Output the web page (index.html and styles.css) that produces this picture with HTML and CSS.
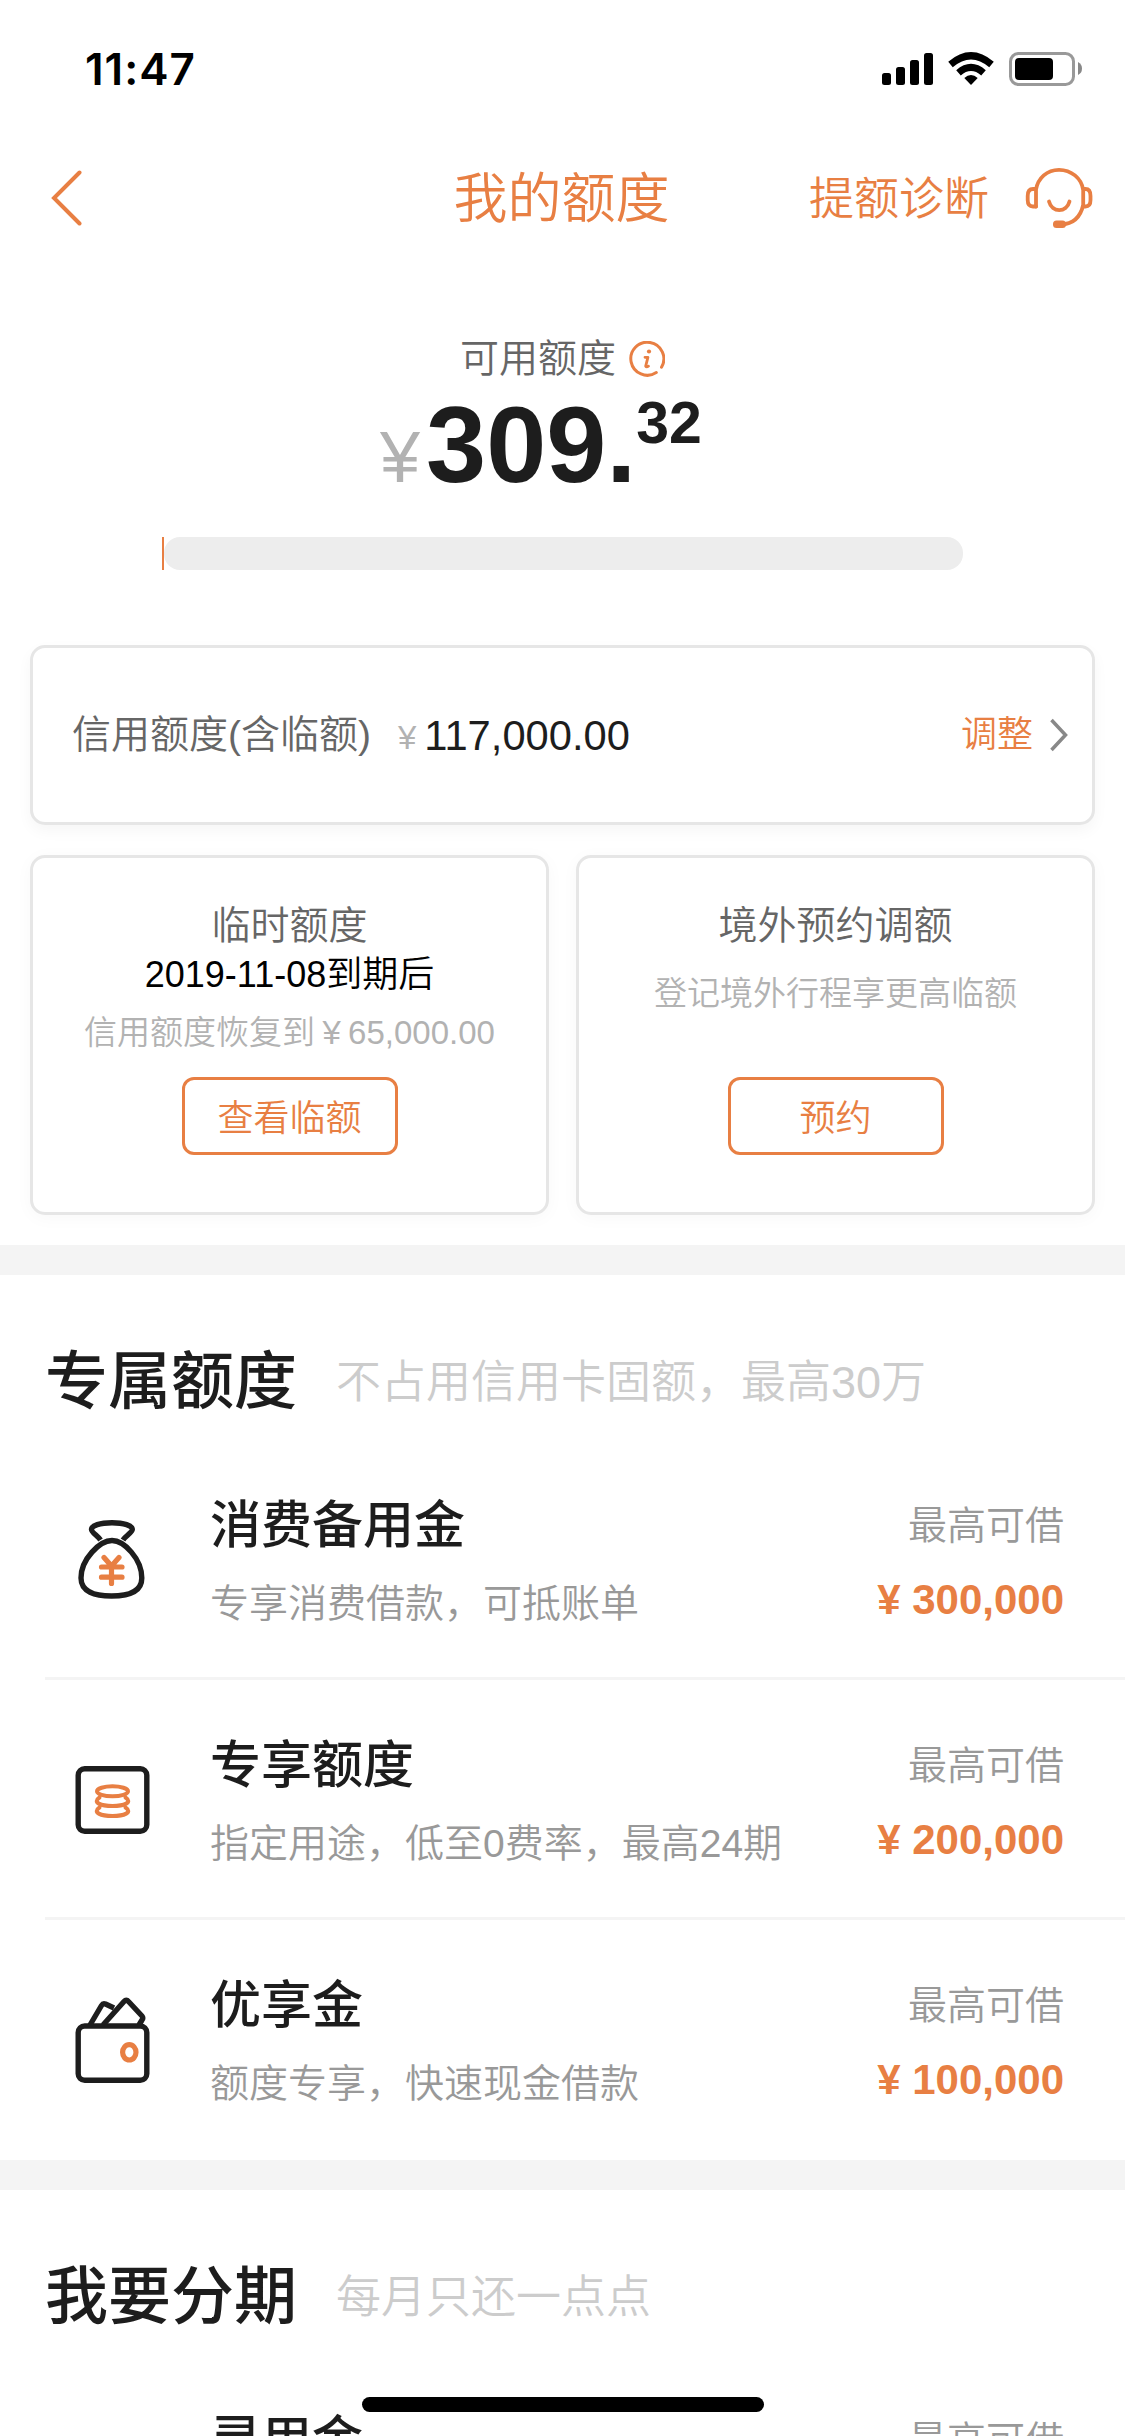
FILE: index.html
```html
<!DOCTYPE html>
<html lang="zh-CN">
<head>
<meta charset="utf-8">
<title>我的额度</title>
<link rel="stylesheet" href="styles.css">
</head>
<body>
<div class="screen">
  <div class="status">
    <span class="time">11:47</span>
    <svg class="status-icons" width="202" height="36" viewBox="881 51 202 36">
      <rect x="882" y="73" width="9" height="12" rx="2.5"/>
      <rect x="896" y="67" width="9" height="18" rx="2.5"/>
      <rect x="910" y="60" width="9" height="25" rx="2.5"/>
      <rect x="924" y="53" width="9" height="32" rx="2.5"/>
      <g fill="none" stroke="#000" stroke-width="7">
        <path d="M950.5 64.5Q971 47 991.500 64.500"/>
        <path d="M958.500 72.800Q971 62 983.500 72.800"/>
      </g>
      <path d="M964.300 78Q971 72 977.700 78L971 85Z"/>
      <rect x="1010.500" y="53.500" width="63" height="31" rx="8" fill="none" stroke="#999" stroke-width="3"/>
      <rect x="1015" y="58" width="38" height="22" rx="4"/>
      <path d="M1078 62Q1082 64 1082 68.500T1078 75Z" fill="#888"/>
    </svg>
  </div>

  <header class="nav">
    <svg class="back" width="32" height="58" viewBox="0 0 32 58"><path d="M29.500 3.500L4 29L29.500 54.500"/></svg>
    <h1 class="nav-title">我的额度</h1>
    <div class="nav-actions">
      <span>提额诊断</span>
      <svg class="headset" width="68" height="62" viewBox="1025 167 68 62">
        <path d="M1036 206.500V189.500C1038 178 1047 169.800 1059 169.800S1081.500 178 1083.200 190V205C1080.500 217 1073 224 1061 224.500"/>
        <path d="M1035.500 189H1033Q1027.700 189 1027.700 196V200Q1027.700 206.500 1033 206.500H1036"/>
        <path d="M1083.500 189H1085.500Q1090.500 189 1090.500 196V200Q1090.500 206.500 1085.500 206.500H1083"/>
        <path d="M1049 201.500C1052 213 1066.500 213 1069.500 201.500"/>
        <rect class="mic" x="1053" y="220.500" width="13" height="7.500" rx="3.500"/>
      </svg>
    </div>
  </header>

  <section class="hero">
    <div class="hero-label">
      <span>可用额度</span>
      <svg width="36" height="36" viewBox="0 0 36 36">
        <path class="ring" d="M32.500 26.200A16.500 16.500 0 1 0 27.300 31.600"/>
        <circle class="dot" cx="20" cy="10.500" r="2.100"/>
        <path class="stem" d="M16 16.300H18.900L16.700 25.200Q17.500 26.500 19.500 25.200"/>
      </svg>
    </div>
    <div class="hero-amount"><span class="yen">¥</span>309.<span class="cents">32</span></div>
    <div class="meter"><i class="meter-used"></i><i class="meter-rest"></i></div>
  </section>

  <section class="cards">
    <div class="card credit">
      <span class="credit-label">信用额度(含临额)</span>
      <span class="credit-yen">¥</span>
      <span class="credit-amount">117,000.00</span>
      <span class="adjust">调整</span>
      <svg class="chevron" width="20" height="34" viewBox="0 0 20 34"><path d="M2.500 2L16.500 17L2.500 32"/></svg>
    </div>
    <div class="card option">
      <div class="option-title">临时额度</div>
      <div class="option-date">2019-11-08到期后</div>
      <div class="option-note restore">信用额度恢复到<span class="wide-yen">¥</span>65,000.00</div>
      <div class="button">查看临额</div>
    </div>
    <div class="card option">
      <div class="option-title">境外预约调额</div>
      <div class="option-note travel">登记境外行程享更高临额</div>
      <div class="button">预约</div>
    </div>
  </section>

  <section class="group">
    <div class="group-head"><h2>专属额度</h2><span>不占用信用卡固额，最高30万</span></div>
    <div class="row">
      <svg class="icon" width="80" height="96" viewBox="0 0 80 96">
        <path d="M40 28.500C52 28.500 69.800 47 69.800 66C69.800 80 56 84 39.500 84S9 80 9 66C9 47 28 28.500 40 28.500Z"/>
        <path d="M28.500 28C26 24 19.500 20.500 19.500 17.500C19.500 13.500 28 10.700 40 10.700S60.300 13.500 60.300 17.500C60.300 20.500 53.500 24 51 28"/>
        <path class="accent" d="M32 45.500L39.500 54L47 45.500M39.500 54V71.500M29.500 55H50M29.500 65.200H50"/>
      </svg>
      <div class="row-text"><h3>消费备用金</h3><p>专享消费借款，可抵账单</p></div>
      <div class="row-value"><span>最高可借</span><b>¥ 300,000</b></div>
    </div>
    <div class="row">
      <svg class="icon" width="80" height="96" viewBox="0 0 80 96">
        <rect x="6.200" y="16.700" width="68.600" height="62.600" rx="6.500"/>
        <g class="accent thin">
          <ellipse cx="40.500" cy="39.300" rx="15.500" ry="5"/>
          <path d="M27.500 45.500C20 50.500 29 54 40.500 54S61 50.500 53.500 45.500"/>
          <path d="M27.500 55.500C20 60.500 29 64 40.500 64S61 60.500 53.500 55.500"/>
        </g>
      </svg>
      <div class="row-text"><h3>专享额度</h3><p>指定用途，低至0费率，最高24期</p></div>
      <div class="row-value"><span>最高可借</span><b>¥ 200,000</b></div>
    </div>
    <div class="row">
      <svg class="icon" width="80" height="96" viewBox="0 0 80 96">
        <rect x="6.200" y="34" width="68.600" height="54.200" rx="6.500"/>
        <path d="M18 33L29.500 13.500Q31 11 33.500 12L42 16"/>
        <path d="M31 33L52 9.500Q54.300 7 56.500 9.500L70 24Q71.500 26 70 28L67 33"/>
        <ellipse class="accent" cx="57.300" cy="60.300" rx="6.700" ry="7.700"/>
      </svg>
      <div class="row-text"><h3>优享金</h3><p>额度专享，快速现金借款</p></div>
      <div class="row-value"><span>最高可借</span><b>¥ 100,000</b></div>
    </div>
  </section>

  <section class="group">
    <div class="group-head"><h2>我要分期</h2><span>每月只还一点点</span></div>
    <div class="row">
      <div class="icon"></div>
      <div class="row-text"><h3>灵用金</h3></div>
      <div class="row-value"><span>最高可借</span></div>
    </div>
  </section>
  <div class="home-indicator"></div>
</div>
</body>
</html>
```
FILE: styles.css
```css
* { box-sizing: border-box; }
body {
  margin: 0;
  background: #fff;
  color: #1d1d1d;
  font-family: "Liberation Sans", "Noto Sans CJK SC", sans-serif;
  font-weight: 350;
}
h1, h2, h3, p { margin: 0; }
svg { display: block; flex: none; }
.screen { position: relative; width: 1125px; height: 2436px; overflow: hidden; }

.status {
  height: 132px;
  padding: 6px 42px 0 85px;
  display: flex;
  align-items: center;
  justify-content: space-between;
  color: #000;
}
.time { font: 600 44px/1 Inter, sans-serif; letter-spacing: 1px; }

.nav {
  height: 132px;
  padding: 0 32px 0 30px;
  display: grid;
  grid-template-columns: 1fr auto 1fr;
  align-items: center;
  color: #e87f43;
}
.back { margin-left: 20px; }
.back path { fill: none; stroke: #e87f43; stroke-width: 4; stroke-linecap: round; }
.nav-title { font-size: 54px; font-weight: 350; line-height: 70px; padding-top: 2px; }
.nav-actions { display: flex; align-items: center; justify-content: flex-end; gap: 36px; font-size: 45px; line-height: 60px; white-space: nowrap; }
.nav-actions span { padding-top: 4px; }
.headset path { fill: none; stroke: #e87f43; stroke-width: 3.8; stroke-linecap: round; stroke-linejoin: round; }
.headset .mic { fill: #e87f43; }

.hero { height: 381px; padding-top: 65px; }
.hero-label {
  height: 60px;
  display: flex;
  align-items: center;
  justify-content: center;
  gap: 13px;
  font-size: 39px;
  line-height: 50px;
  color: #666;
}
.hero-label .ring { fill: none; stroke: #e87f43; stroke-width: 3; stroke-linecap: round; }
.hero-label .dot { fill: #e87f43; }
.hero-label .stem { fill: none; stroke: #e87f43; stroke-width: 2.800; stroke-linecap: round; stroke-linejoin: round; }
.hero-amount {
  margin: 2px 0 38px;
  padding-right: 43px;
  height: 108px;
  text-align: center;
  font-size: 108px;
  font-weight: 700;
  line-height: 108px;
}
.yen { margin-right: 6px; font-size: 72px; font-weight: 400; line-height: 1; color: #b2b2b2; }
.cents { font-size: 59px; line-height: 0; vertical-align: 39px; }
.meter { width: 801px; height: 33px; margin-left: 162px; display: flex; }
.meter-used { width: 2px; background: #e87f43; }
.meter-rest { flex: 1; border-radius: 16px; background: #ededed; }

.cards {
  padding: 0 30px 30px;
  display: grid;
  grid-template-columns: 1fr 1fr;
  gap: 30px 27px;
}
.card { background: #fff; border: 3px solid #e6e6e6; border-radius: 15px; box-shadow: 0 3px 18px rgba(0, 0, 0, .03); }
.credit { grid-column: 1 / -1; height: 180px; padding: 0 23px 0 39px; display: flex; align-items: center; line-height: 50px; box-shadow: 0 6px 15px rgba(0, 0, 0, .04); }
.credit-label { font-size: 39px; color: #666; }
.credit-yen { margin: 5px 8px 0 27px; font-size: 33px; color: #b2b2b2; }
.credit-amount { padding-top: 1px; font-size: 41.700px; }
.adjust { margin: 0 16px 0 auto; font-size: 36px; color: #e87f43; }
.chevron path { fill: none; stroke: #888; stroke-width: 3.500; }

.option { height: 360px; padding: 43px 0 57px; display: flex; flex-direction: column; align-items: center; }
.option-title { font-size: 39px; line-height: 50px; color: #666; }
.option-date { font-size: 36px; line-height: 48px; color: #000; }
.option-note { font-size: 33px; line-height: 48px; color: #b2b2b2; }
.restore { margin-top: 10px; }
.travel { margin-top: 19px; }
.wide-yen { display: inline-block; width: 33px; text-align: center; }
.button {
  width: 216px;
  height: 78px;
  margin-top: auto;
  border: 3px solid #e87f43;
  border-radius: 12px;
  font-size: 36px;
  line-height: 78px;
  text-align: center;
  color: #e87f43;
}

.group { padding-left: 45px; border-top: 30px solid #f4f4f4; }
.group-head { height: 165px; padding-top: 46px; display: flex; align-items: center; }
h2 { font-size: 63px; font-weight: 500; line-height: 80px; }
.group-head span { margin: 5px 0 0 39px; font-size: 45px; line-height: 60px; color: #ccc; }
.row { height: 240px; padding: 48px 61px 0 27px; display: flex; border-bottom: 3px solid #f4f4f4; }
.row:last-child { border-bottom: 0; }
.icon { width: 80px; height: 96px; margin: 24px 58px 0 0; fill: none; stroke: #1d1d1d; stroke-width: 5.400; stroke-linejoin: round; }
.icon .accent { stroke: #e87f43; stroke-width: 5.200; stroke-linecap: round; }
.icon .thin { stroke-width: 4; }
.row-text { flex: 1; }
h3 { font-size: 51px; font-weight: 500; line-height: 76px; }
.row-text p { font-size: 39px; line-height: 80px; color: #999; }
.row-value { display: flex; flex-direction: column; align-items: flex-end; }
.row-value span { font-size: 39px; line-height: 76px; color: #999; }
.row-value b { font-size: 42px; font-weight: 700; line-height: 72px; color: #e87f43; }

.home-indicator { position: absolute; left: 362px; top: 2397px; width: 402px; height: 15px; border-radius: 8px; background: #000; }
```
